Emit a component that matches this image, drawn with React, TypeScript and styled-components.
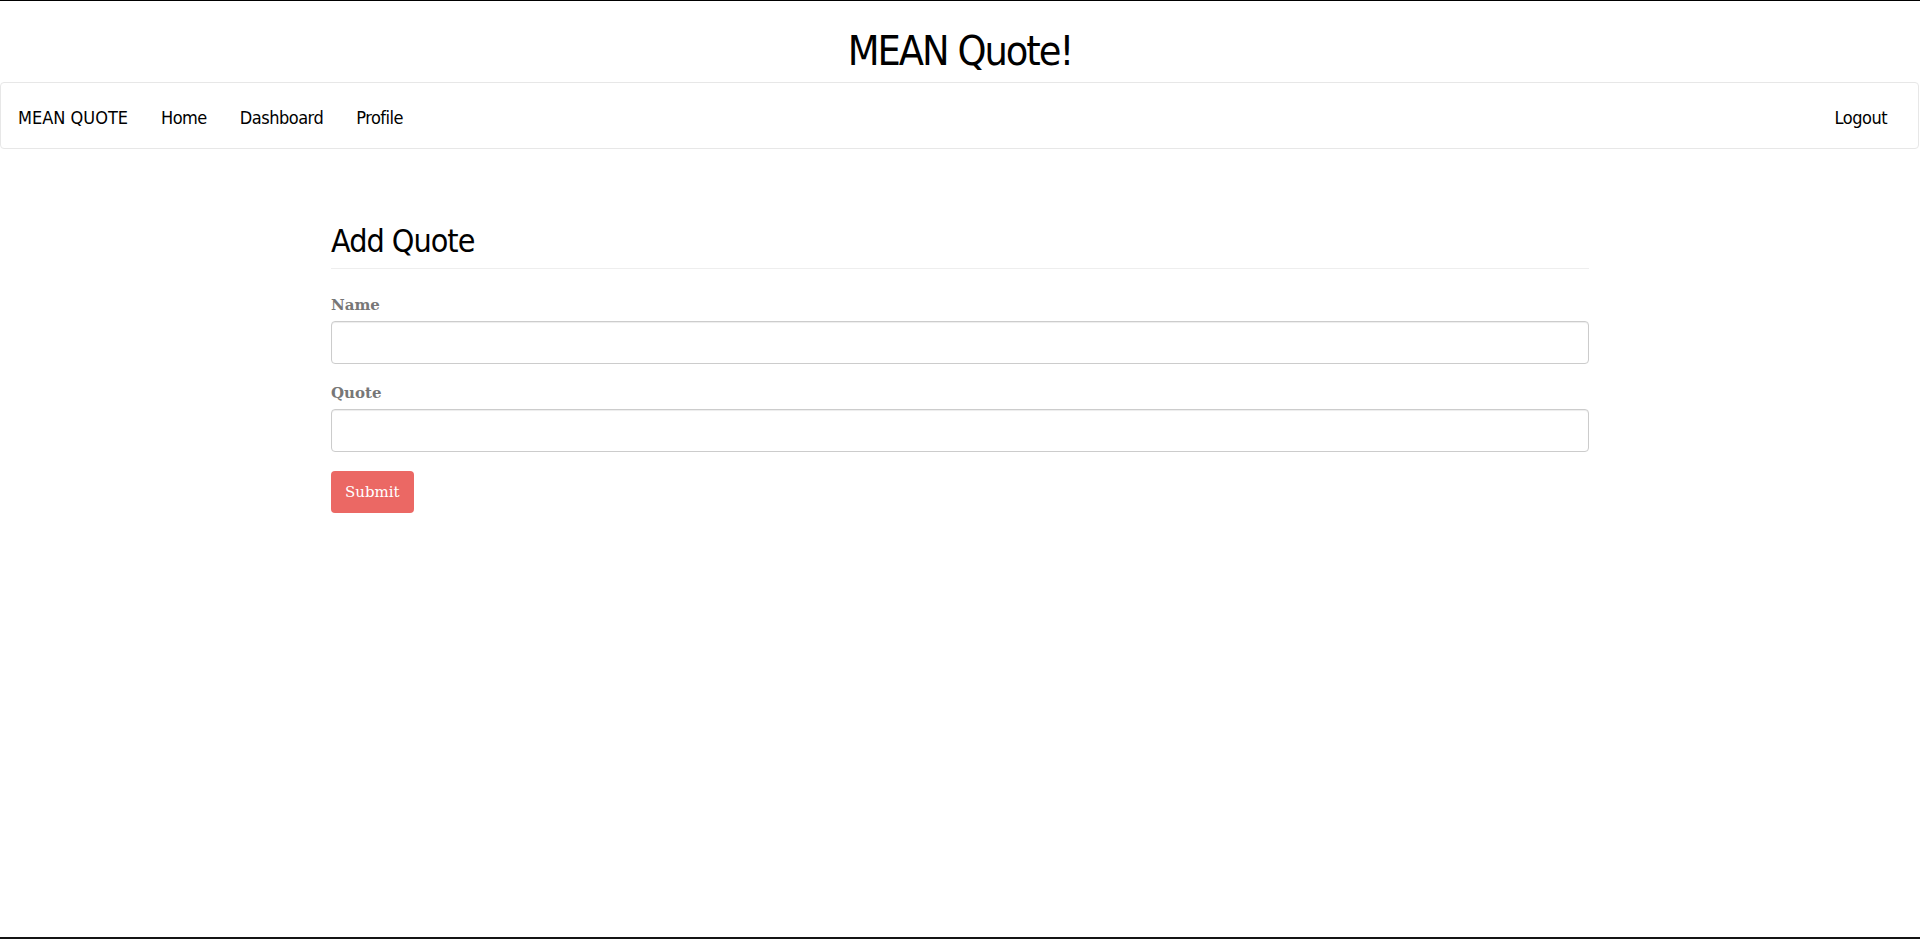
import React from "react";
import styled, { createGlobalStyle } from "styled-components";

const GlobalStyle = createGlobalStyle`
  html, body {
    margin: 0;
    padding: 0;
    background: #fff;
  }
  * {
    box-sizing: border-box;
  }
`;

const narrowFont = `"DejaVu Sans Condensed", "Liberation Sans", sans-serif`;
const bodyFont = `"DejaVu Serif", "Liberation Serif", serif`;

const navLinks = ["Home", "Dashboard", "Profile"];

function App() {
  return (
    <Page>
      <GlobalStyle />
      <Title>MEAN Quote!</Title>
      <Navbar>
        <NavGroup>
          <Brand href="#">MEAN QUOTE</Brand>
          {navLinks.map((link) => (
            <NavLink key={link} href="#">
              {link}
            </NavLink>
          ))}
        </NavGroup>
        <NavGroup>
          <NavLink href="#">Logout</NavLink>
        </NavGroup>
      </Navbar>
      <Container>
        <Heading>Add Quote</Heading>
        <Form onSubmit={(e) => e.preventDefault()}>
          <Field>
            <Label htmlFor="name">Name</Label>
            <Input id="name" type="text" />
          </Field>
          <Field>
            <Label htmlFor="quote">Quote</Label>
            <Input id="quote" type="text" />
          </Field>
          <SubmitButton type="submit">Submit</SubmitButton>
        </Form>
      </Container>
      <BottomEdge />
    </Page>
  );
}

const Page = styled.div`
  min-height: 100vh;
  display: flex;
  flex-direction: column;
  border-top: 1px solid #000;
`;

const Title = styled.h1`
  margin: 25px 0 6px;
  font-family: ${narrowFont};
  font-size: 41px;
  line-height: 50px;
  letter-spacing: -2px;
  font-weight: 400;
  color: #000;
  text-align: center;
`;

const Navbar = styled.nav`
  height: 67px;
  margin: 0 1px 0 0;
  padding: 5px 31px 0 17px;
  display: flex;
  align-items: center;
  justify-content: space-between;
  border: 1px solid #e7e7e7;
  border-radius: 4px;
  background: #fff;
`;

const NavGroup = styled.div`
  display: flex;
  align-items: center;
  gap: 33px;
`;

const NavLink = styled.a`
  font-family: ${narrowFont};
  font-size: 18px;
  line-height: 24px;
  letter-spacing: -0.5px;
  color: #000;
  text-decoration: none;
`;

const Brand = styled(NavLink)`
  letter-spacing: 0;
  text-transform: uppercase;
`;

const Container = styled.main`
  width: 1258px;
  margin: 0 auto;
  padding-top: 72px;
`;

const Heading = styled.h2`
  margin: 0;
  padding-bottom: 7px;
  font-family: ${narrowFont};
  font-size: 32px;
  line-height: 40px;
  letter-spacing: -1px;
  font-weight: 400;
  color: #000;
  border-bottom: 1px solid #eee;
`;

const Form = styled.form`
  padding-top: 26px;
  display: flex;
  flex-direction: column;
  align-items: flex-start;
`;

const Field = styled.div`
  width: 100%;
  margin-bottom: 19px;
  display: flex;
  flex-direction: column;
  gap: 6px;
`;

const Label = styled.label`
  font-family: ${bodyFont};
  font-size: 15px;
  line-height: 20px;
  font-weight: 700;
  color: #777;
`;

const Input = styled.input`
  width: 100%;
  height: 43px;
  padding: 8px 12px;
  border: 1px solid #ccc;
  border-radius: 4px;
  font-family: ${bodyFont};
  font-size: 15px;
  outline: none;
  box-shadow: inset 0 1px 1px rgba(0, 0, 0, 0.075);
`;

const SubmitButton = styled.button`
  height: 42px;
  padding: 0 14px;
  border: none;
  border-radius: 4px;
  background: #eb6864;
  color: #fff;
  font-family: ${bodyFont};
  font-size: 15px;
  cursor: pointer;
`;

const BottomEdge = styled.div`
  margin-top: auto;
  height: 2px;
  background: #141414;
`;

export default App;
